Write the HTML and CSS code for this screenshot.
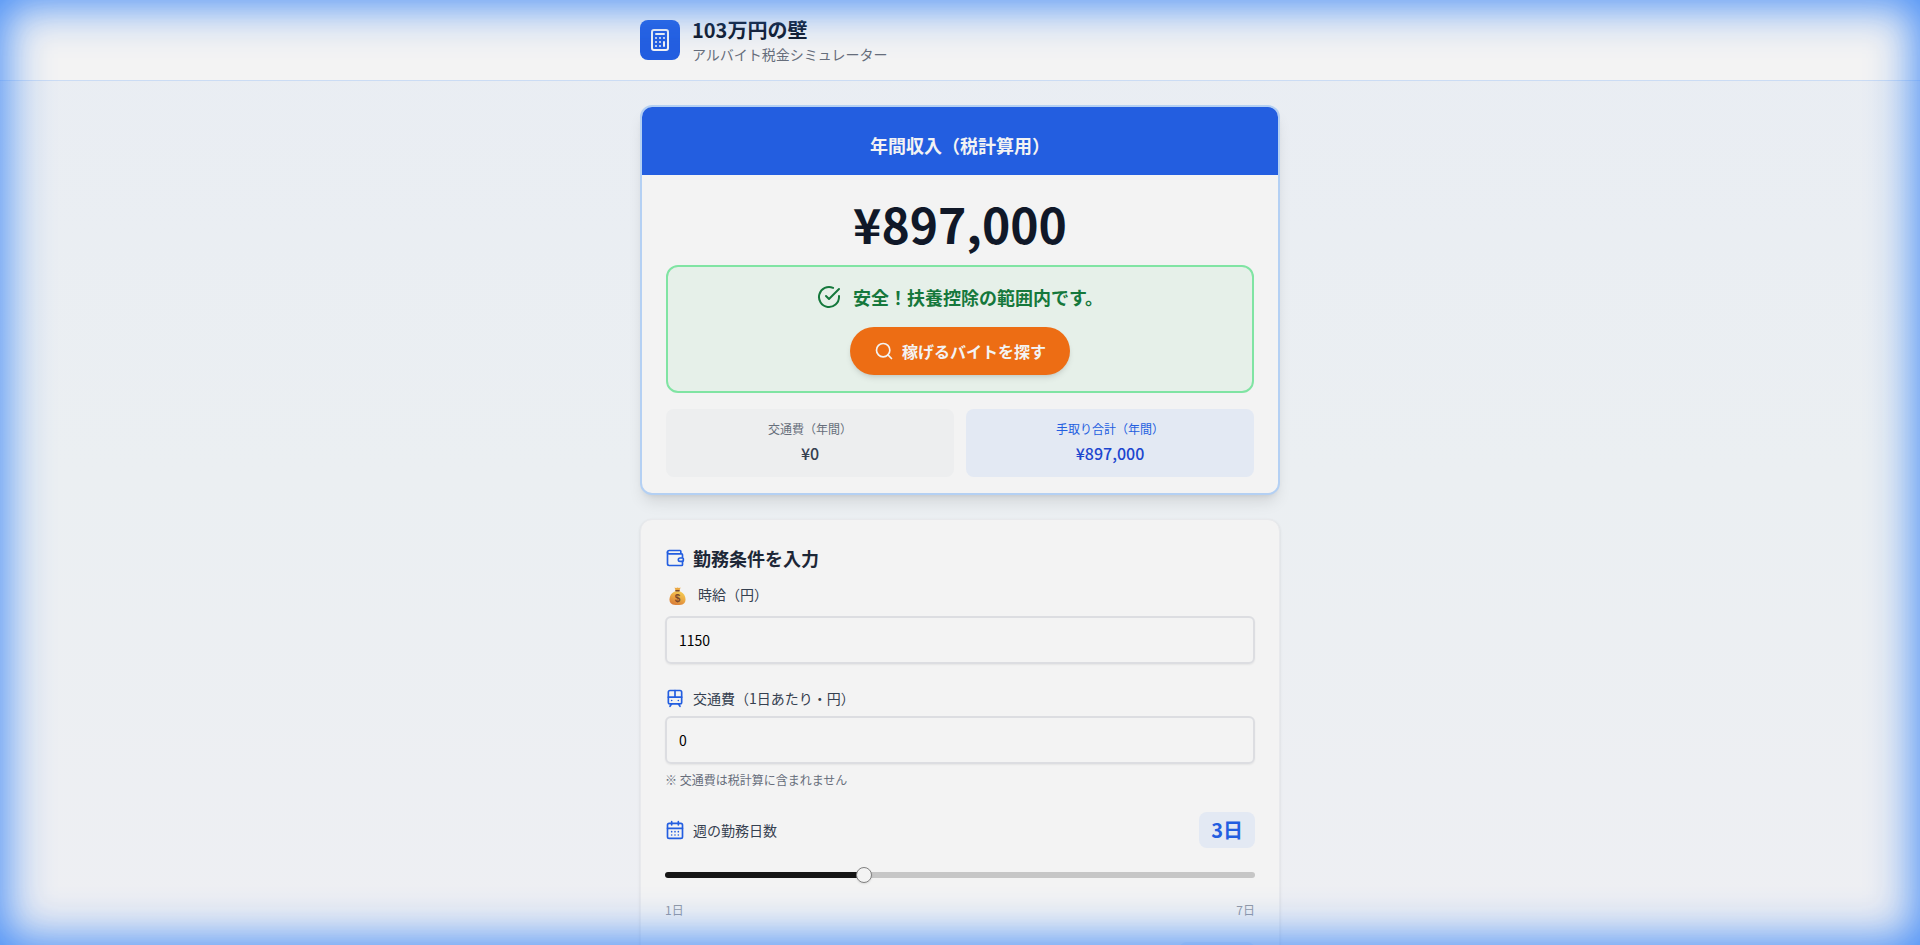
FILE: index.html
```html
<!DOCTYPE html>
<html lang="ja">
<head>
<meta charset="utf-8">
<meta name="viewport" content="width=device-width, initial-scale=1">
<title>103万円の壁</title>
<link rel="stylesheet" href="styles.css">
</head>
<body>
<header class="site-header">
  <div class="container brand">
    <div class="logo">
      <svg class="icon icon-md" viewBox="0 0 24 24" aria-hidden="true"><rect width="16" height="20" x="4" y="2" rx="2"/><path d="M8 6h8M16 14v4M16 10h.01M12 10h.01M8 10h.01M12 14h.01M8 14h.01M12 18h.01M8 18h.01"/></svg>
    </div>
    <div>
      <h1 class="brand-title">103万円の壁</h1>
      <p class="brand-sub">アルバイト税金シミュレーター</p>
    </div>
  </div>
</header>

<main class="container main">
  <section class="card result">
    <h2 class="result-head">年間収入（税計算用）</h2>
    <div class="result-body">
      <p class="amount">¥897,000</p>
      <div class="status">
        <p class="status-text">
          <svg class="icon icon-md" viewBox="0 0 24 24" aria-hidden="true"><path d="M22 11.08V12a10 10 0 1 1-5.93-9.14"/><path d="m9 11 3 3L22 4"/></svg>
          安全！扶養控除の範囲内です。
        </p>
        <button type="button" class="search-button">
          <svg class="icon icon-sm" viewBox="0 0 24 24" aria-hidden="true"><circle cx="11" cy="11" r="8"/><path d="m21 21-4.3-4.3"/></svg>
          稼げるバイトを探す
        </button>
      </div>
      <div class="stats">
        <div class="stat">
          <p class="stat-label">交通費（年間）</p>
          <p class="stat-value">¥0</p>
        </div>
        <div class="stat stat-net">
          <p class="stat-label">手取り合計（年間）</p>
          <p class="stat-value">¥897,000</p>
        </div>
      </div>
    </div>
  </section>

  <form class="card conditions">
    <h2 class="form-title">
      <svg class="icon icon-sm" viewBox="0 0 24 24" aria-hidden="true"><path d="M19 7V4a1 1 0 0 0-1-1H5a2 2 0 0 0 0 4h15a1 1 0 0 1 1 1v4h-3a2 2 0 0 0 0 4h3a1 1 0 0 0 1-1v-2a1 1 0 0 0-1-1"/><path d="M3 5v14a2 2 0 0 0 2 2h15a1 1 0 0 0 1-1v-4"/></svg>
      勤務条件を入力
    </h2>
    <div class="fields">
      <div class="field">
        <label class="label label-wage" for="wage">
          <svg class="money-bag" viewBox="0 0 25 24" aria-hidden="true">
            <defs>
              <linearGradient id="bag" x1="0.8" y1="0" x2="0.3" y2="1">
                <stop offset="0" stop-color="#f6cf55"/>
                <stop offset="0.5" stop-color="#eba843"/>
                <stop offset="1" stop-color="#d87c38"/>
              </linearGradient>
            </defs>
            <path d="M9.500 5.600 11 6l1.500-.6L14 6l1.600-.4-1.400 3.600h-3.400Z" fill="#eba843"/>
            <path d="M10.500 9.200C7 10.200 4.500 13.800 4.500 17.400c0 4 2.500 5.600 8 5.600s8-1.600 8-5.600c0-3.600-2.500-7.200-6-8.200Z" fill="url(#bag)"/>
            <path d="M10.900 8.800h3.200" stroke="#7d4a2b" stroke-width="1.400" stroke-linecap="round"/>
            <text x="12.500" y="20" class="bag-sign">$</text>
          </svg>
          時給（円）
        </label>
        <input class="input" id="wage" type="text" inputmode="numeric" value="1150">
      </div>
      <div class="field">
        <label class="label" for="transport">
          <svg class="icon icon-sm" viewBox="0 0 24 24" aria-hidden="true"><rect width="16" height="16" x="4" y="3" rx="2"/><path d="M4 11h16M12 3v8M8 19l-2 3M18 22l-2-3M8 15h.01M16 15h.01"/></svg>
          交通費（1日あたり・円）
        </label>
        <input class="input" id="transport" type="text" inputmode="numeric" value="0">
        <p class="note">※ 交通費は税計算に含まれません</p>
      </div>
      <div class="slider-field">
        <div class="slider-head">
          <label class="label" for="days">
            <svg class="icon icon-sm" viewBox="0 0 24 24" aria-hidden="true"><path d="M8 2v4M16 2v4"/><rect width="18" height="18" x="3" y="4" rx="2"/><path d="M3 10h18M8 14h.01M12 14h.01M16 14h.01M8 18h.01M12 18h.01M16 18h.01"/></svg>
            週の勤務日数
          </label>
          <output class="badge" for="days">3日</output>
        </div>
        <input class="slider" id="days" type="range" min="1" max="7" value="3" style="--ratio: 0.3333">
        <div class="scale"><span>1日</span><span>7日</span></div>
      </div>
      <div class="slider-head">
        <output class="badge badge-wide"></output>
      </div>
    </div>
  </form>
</main>
<div class="glow" aria-hidden="true"></div>
</body>
</html>
```
FILE: styles.css
```css
* {
  box-sizing: border-box;
}

body {
  margin: 0;
  height: 100vh;
  overflow-y: auto;
  scrollbar-width: none;
  background: linear-gradient(#e9edf3, #ebeff2 50%, #eeeff3);
  color: #101828;
  font-family: "Noto Sans CJK JP", "Noto Sans", sans-serif;
  font-size: 14px;
  line-height: 20px;
}

h1, h2, p {
  margin: 0;
}

.container {
  width: 100%;
  max-width: 640px;
  margin: 0 auto;
}

.icon {
  flex: none;
  fill: none;
  stroke: currentColor;
  stroke-width: 2;
  stroke-linecap: round;
  stroke-linejoin: round;
}

.icon-md {
  width: 24px;
  height: 24px;
}

.icon-sm {
  width: 20px;
  height: 20px;
}

.site-header {
  background: #f3f3f3;
  border-bottom: 1px solid #cbdcf4;
}

.brand {
  display: flex;
  align-items: center;
  gap: 12px;
  padding: 16px 0;
}

.logo {
  display: grid;
  place-items: center;
  width: 40px;
  height: 40px;
  border-radius: 8px;
  background: #235ee0;
  color: #f3f3f3;
}

.brand-title {
  font-size: 20px;
  line-height: 28px;
  font-weight: 700;
}

.brand-sub {
  color: #676e7b;
}

.main {
  display: flex;
  flex-direction: column;
  gap: 24px;
  padding: 24px 0;
}

.card {
  background: #f3f3f3;
  border-radius: 12px;
}

.result {
  overflow: hidden;
  border: 2px solid #b4d0f3;
  box-shadow: 0 10px 15px -3px rgba(0, 0, 0, 0.1), 0 4px 6px -4px rgba(0, 0, 0, 0.1);
}

.result-head {
  padding: 24px 24px 16px;
  background: #235ee0;
  color: #f3f3f3;
  font-size: 18px;
  line-height: 28px;
  text-align: center;
}

.result-body {
  display: flex;
  flex-direction: column;
  gap: 16px;
  padding: 24px 24px 16px;
}

.amount {
  padding-bottom: 2px;
  font-size: 48px;
  line-height: 48px;
  font-weight: 700;
  text-align: center;
}

.status {
  display: flex;
  flex-direction: column;
  align-items: center;
  gap: 16px;
  padding: 16px;
  border: 2px solid #80e4a3;
  border-radius: 12px;
  background: #e6f0e9;
}

.status-text {
  display: flex;
  align-items: center;
  gap: 12px;
  color: #15783c;
  font-size: 18px;
  line-height: 28px;
  font-weight: 700;
}

.search-button {
  display: flex;
  align-items: center;
  gap: 8px;
  padding: 12px 24px;
  border: 0;
  border-radius: 24px;
  background: #ed6d14;
  color: #f3f3f3;
  font: inherit;
  font-size: 16px;
  line-height: 24px;
  font-weight: 700;
  box-shadow: 0 4px 6px -1px rgba(0, 0, 0, 0.1), 0 2px 4px -2px rgba(0, 0, 0, 0.1);
}

.stats {
  display: grid;
  grid-template-columns: 1fr 1fr;
  gap: 12px;
}

.stat {
  display: flex;
  flex-direction: column;
  gap: 4px;
  padding: 12px;
  border-radius: 8px;
  background: #edeeef;
  color: #354050;
  text-align: center;
}

.stat-label {
  color: #676e7b;
  font-size: 12px;
  line-height: 16px;
}

.stat-value {
  font-size: 16px;
  line-height: 24px;
  font-weight: 500;
}

.stat-net {
  background: #e3e9f3;
  color: #1c46cf;
}

.stat-net .stat-label {
  color: #235ee0;
}

.conditions {
  display: flex;
  flex-direction: column;
  gap: 12px;
  padding: 24px;
  border: 1px solid #e8e9ec;
  box-shadow: 0 1px 3px rgba(0, 0, 0, 0.1);
}

.form-title {
  display: flex;
  align-items: center;
  gap: 8px;
  color: #1d2737;
  font-size: 18px;
  line-height: 28px;
  font-weight: 700;
}

.conditions .icon {
  color: #235ee0;
}

.fields {
  display: flex;
  flex-direction: column;
  gap: 24px;
}

.field {
  display: flex;
  flex-direction: column;
  gap: 8px;
}

.label {
  display: flex;
  align-items: center;
  gap: 8px;
  color: #354050;
}

.label-wage {
  height: 20px;
  margin-bottom: 4px;
}

.money-bag {
  flex: none;
  width: 25px;
  height: 24px;
}

.bag-sign {
  fill: #7d4a2b;
  font-family: "Liberation Sans", sans-serif;
  font-size: 10px;
  font-weight: 700;
  text-anchor: middle;
}

.input {
  width: 100%;
  height: 48px;
  padding: 4px 12px;
  border: 2px solid #dcdde1;
  border-radius: 6px;
  background: transparent;
  color: #000;
  font: inherit;
  box-shadow: 0 1px 2px rgba(0, 0, 0, 0.06);
}

.note {
  color: #676e7b;
  font-size: 12px;
  line-height: 16px;
}

.slider-field {
  display: flex;
  flex-direction: column;
  gap: 24px;
}

.slider-head {
  display: flex;
  align-items: center;
  justify-content: space-between;
}

.badge {
  padding: 4px 12px;
  border-radius: 8px;
  background: #e3e9f3;
  color: #235ee0;
  font-size: 20px;
  line-height: 28px;
  font-weight: 700;
}

.badge-wide {
  width: 76px;
  height: 36px;
  margin-left: auto;
}

.slider {
  appearance: none;
  display: block;
  width: 100%;
  height: 6px;
  margin: 0;
  border-radius: 3px;
  background: linear-gradient(#161616, #161616) 0 0 / calc(8px + (100% - 16px) * var(--ratio)) 100% no-repeat #c6c6c6;
}

.slider::-webkit-slider-thumb {
  appearance: none;
  width: 16px;
  height: 16px;
  border: 1px solid #808080;
  border-radius: 50%;
  background: #f3f3f3;
  box-shadow: 0 1px 2px rgba(0, 0, 0, 0.1);
}

.scale {
  display: flex;
  justify-content: space-between;
  color: #949aa5;
  font-size: 12px;
  line-height: 16px;
}

.glow {
  position: fixed;
  inset: 0;
  pointer-events: none;
  box-shadow: inset 0 0 44px 6px rgba(59, 135, 246, 0.94);
}
```
